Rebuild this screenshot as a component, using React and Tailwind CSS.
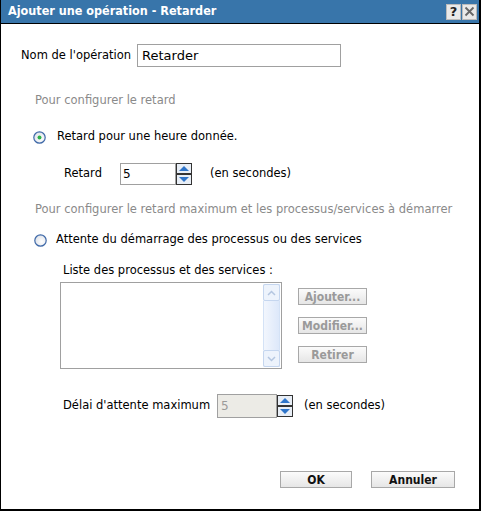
import React from 'react'

const font = { fontFamily: '"DejaVu Sans", Verdana, sans-serif' }
const titleFont = { fontFamily: '"DejaVu Sans Condensed", "DejaVu Sans", sans-serif' }

function Spinner() {
  return (
    <svg width='16' height='22' viewBox='0 0 16 22' className='block shrink-0'>
      <rect x='0.5' y='0.5' width='15' height='10' fill='#e8eef6' stroke='#333' />
      <rect x='0.5' y='11.5' width='15' height='10' fill='#e8eef6' stroke='#333' />
      <polygon points='3,8 8,3 13,8' fill='#2e74c9' />
      <polygon points='3,14 13,14 8,19' fill='#2e74c9' />
    </svg>
  )
}

function Radio({ checked }) {
  return (
    <svg width='13' height='13' viewBox='0 0 13 13' className='block shrink-0'>
      <defs>
        <radialGradient id={checked ? 'rg1' : 'rg2'} cx='0.6' cy='0.6' r='0.6'>
          <stop offset='0' stopColor='#ffffff' />
          <stop offset='1' stopColor='#dfe3ea' />
        </radialGradient>
      </defs>
      <circle cx='6.5' cy='6.5' r='5.7' fill={`url(#${checked ? 'rg1' : 'rg2'})`} stroke='#3f69a8' strokeWidth='1.2' />
      {checked && <circle cx='6.5' cy='6.5' r='2' fill='#2fb24a' />}
    </svg>
  )
}

function GrayButton({ children, w }) {
  return (
    <div
      className={`${w} h-[17px] flex items-center justify-center border border-[#a8a8a8] bg-gradient-to-b from-[#fbfbfb] to-[#e6e6e6] text-[12px] font-bold`}
      style={titleFont}
    >
      {children}
    </div>
  )
}

export default function App() {
  return (
    <div className='w-[481px] h-[511px] bg-white border-l border-r-2 border-b-2 border-black flex flex-col text-[11.5px] text-black whitespace-nowrap' style={font}>
      <div className='h-[24px] bg-[#3875aa] border-b border-black flex items-center justify-between pl-[7px] pr-[2px] shrink-0'>
        <span className='text-white font-bold text-[12.5px]' style={titleFont}>Ajouter une opération - Retarder</span>
        <div className='flex gap-[1px]'>
          <div className='w-[15px] h-[16px] bg-[#e9e9e9] border border-[#bbb] flex items-center justify-center font-bold text-[13px] leading-none text-[#222]'>?</div>
          <div className='w-[15px] h-[16px] bg-[#e9e9e9] border border-[#bbb] flex items-center justify-center'>
            <svg width='11' height='11' viewBox='0 0 11 11'>
              <path d='M1.5 1.5 L9.5 9.5 M9.5 1.5 L1.5 9.5' stroke='#666' strokeWidth='1.8' />
            </svg>
          </div>
        </div>
      </div>

      <div className='mt-[20px] h-[23px] flex items-center pl-[20px]'>
        <span className='w-[116px] shrink-0'>Nom de l'opération</span>
        <div className='w-[204px] h-[23px] border border-[#a0a0a0] flex items-center pl-[4px] text-[13px]'>Retarder</div>
      </div>

      <div className='mt-[26px] h-[16px] flex items-center pl-[34px] text-[#8a8a8a]'>Pour configurer le retard</div>

      <div className='mt-[20px] h-[16px] flex items-center pl-[32px] gap-[11px]'>
        <Radio checked />
        <span>Retard pour une heure donnée.</span>
      </div>

      <div className='mt-[18px] h-[22px] flex items-center pl-[63px]'>
        <span className='w-[56px] shrink-0'>Retard</span>
        <div className='w-[56px] h-[22px] border border-[#a0a0a0] flex items-center pl-[2px] text-[12px]'>5</div>
        <Spinner />
        <span className='ml-[18px]'>(en secondes)</span>
      </div>

      <div className='mt-[17px] h-[16px] flex items-center pl-[34px] text-[#8a8a8a]'>
        Pour configurer le retard maximum et les processus/services à démarrer
      </div>

      <div className='mt-[14px] h-[16px] flex items-center pl-[33px] gap-[9px]'>
        <Radio />
        <span>Attente du démarrage des processus ou des services</span>
      </div>

      <div className='mt-[15px] h-[16px] flex items-center pl-[62px]'>Liste des processus et des services :</div>

      <div className='mt-[3px] flex pl-[59px]'>
        <div className='w-[222px] h-[87px] border border-[#a0a0a0] flex justify-end p-[1px]'>
          <div className='w-[17px] h-full flex flex-col bg-gradient-to-r from-[#eaf1fb] to-[#dbe7fa]'>
            <div className='h-[17px] border border-[#c5d6ef] rounded-[2px] bg-[#edf3fc] flex items-center justify-center'>
              <svg width='9' height='6' viewBox='0 0 9 6'><path d='M1 5 L4.5 1.5 L8 5' stroke='#b4c6e0' strokeWidth='1.5' fill='none' /></svg>
            </div>
            <div className='flex-1 border-x border-[#d4e2f6] bg-gradient-to-r from-[#f2f6fd] to-[#dde8fa]' />
            <div className='h-[17px] border border-[#c5d6ef] rounded-[2px] bg-[#edf3fc] flex items-center justify-center'>
              <svg width='9' height='6' viewBox='0 0 9 6'><path d='M1 1 L4.5 4.5 L8 1' stroke='#b4c6e0' strokeWidth='1.5' fill='none' /></svg>
            </div>
          </div>
        </div>
        <div className='ml-[16px] mt-[6px] flex flex-col gap-[12px] text-[#9a9a9a]'>
          <GrayButton w='w-[69px]'>Ajouter...</GrayButton>
          <GrayButton w='w-[69px]'>Modifier...</GrayButton>
          <GrayButton w='w-[69px]'>Retirer</GrayButton>
        </div>
      </div>

      <div className='mt-[25px] h-[24px] flex items-center pl-[62px]'>
        <span className='w-[154px] shrink-0'>Délai d'attente maximum</span>
        <div className='w-[60px] h-[24px] border border-[#a0a0a0] bg-[#ecebe6] flex items-center pl-[3px] text-[#9a9a9a] text-[12px]'>5</div>
        <Spinner />
        <span className='ml-[11px]'>(en secondes)</span>
      </div>

      <div className='mt-[53px] flex justify-end pr-[24px] gap-[19px] text-[#111]'>
        <GrayButton w='w-[72px]'>OK</GrayButton>
        <GrayButton w='w-[84px]'>Annuler</GrayButton>
      </div>
    </div>
  )
}
